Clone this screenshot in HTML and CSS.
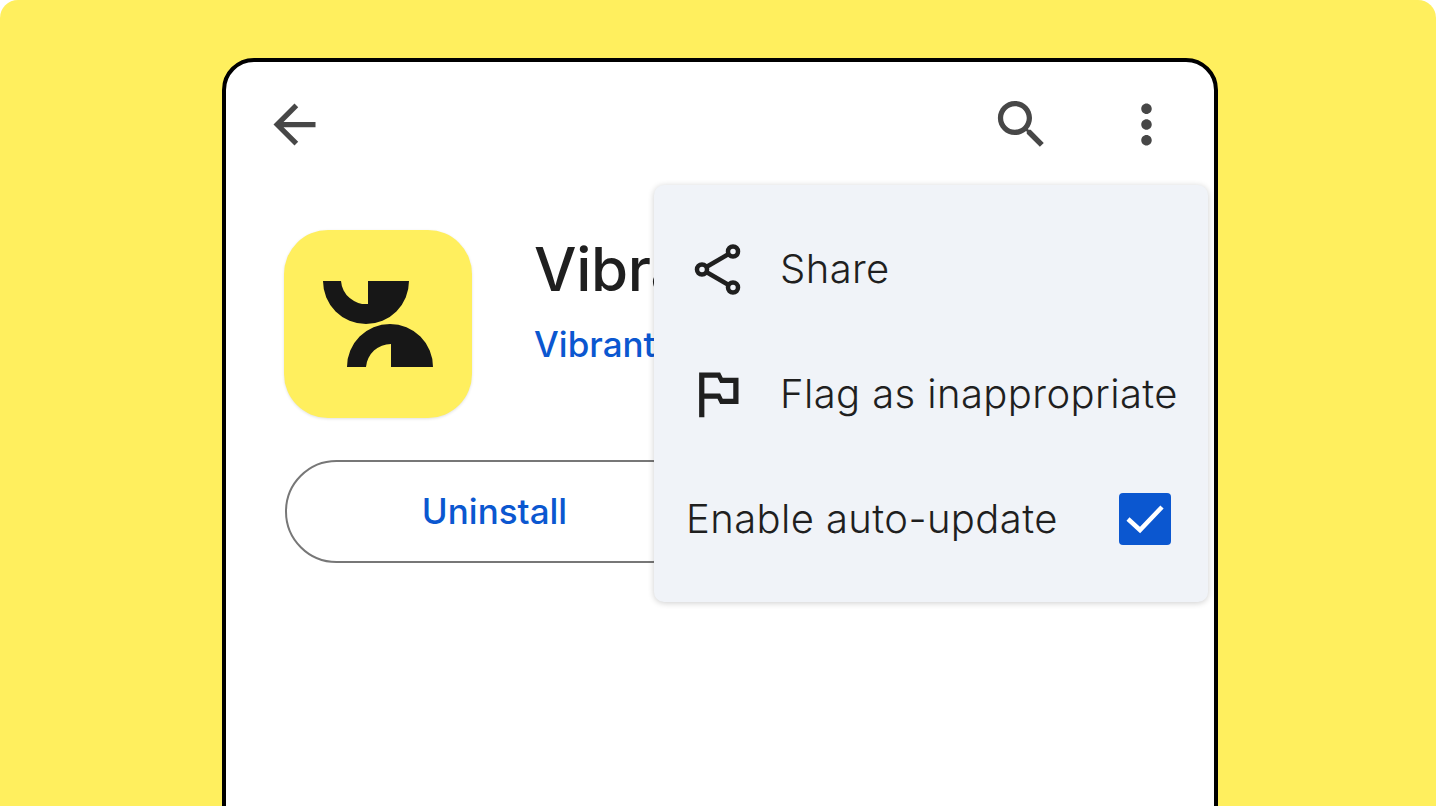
FILE: index.html
```html
<!DOCTYPE html>
<html lang="en">
<head>
    <meta charset="UTF-8">
    <meta name="viewport" content="width=device-width, initial-scale=1.0">
    <title>Enable auto-update</title>
    <link rel="stylesheet" href="styles.css">
</head>
<body>
    <div class="stage">
        <div class="phone">
            <div class="toolbar">
                <svg class="icon" viewBox="0 0 24 24"><path d="M20 11H7.83l5.59-5.59L12 4l-8 8 8 8 1.41-1.41L7.83 13H20v-2z"/></svg>
                <div class="toolbar-right">
                    <svg class="icon" viewBox="0 0 24 24"><path d="M15.5 14h-.79l-.28-.27C15.41 12.59 16 11.11 16 9.5 16 5.91 13.09 3 9.5 3S3 5.91 3 9.5 5.91 16 9.5 16c1.61 0 3.09-.59 4.23-1.57l.27.28v.79l5 4.99L20.49 19l-4.99-5zm-6 0C7.01 14 5 11.99 5 9.5S7.01 5 9.5 5 14 7.01 14 9.5 11.99 14 9.5 14z"/></svg>
                    <svg class="icon" viewBox="0 0 24 24"><path d="M12 8c1.1 0 2-.9 2-2s-.9-2-2-2-2 .9-2 2 .9 2 2 2zm0 2c-1.1 0-2 .9-2 2s.9 2 2 2 2-.9 2-2-.9-2-2-2zm0 6c-1.1 0-2 .9-2 2s.9 2 2 2 2-.9 2-2-.9-2-2-2z"/></svg>
                </div>
            </div>

            <div class="app-info">
                <div class="app-icon">
                    <svg class="app-logo" viewBox="0 0 188 188">
                        <path d="M39 51H57A25 25 0 0 0 84 74V51H125A43 43 0 0 1 39 51Z"/>
                        <path d="M63 137A43 43 0 0 1 149 137H107V114A25 25 0 0 0 82 137Z"/>
                    </svg>
                </div>
                <div class="app-text">
                    <div class="app-name">Vibrant</div>
                    <div class="app-dev">Vibrant</div>
                </div>
            </div>

            <div class="btn-uninstall">Uninstall</div>

            <div class="menu">
                <div class="menu-row">
                    <svg class="menu-icon" viewBox="0 0 63 63">
                        <g class="share-lines">
                            <line x1="16" y1="32.5" x2="47" y2="14.5"/>
                            <line x1="16" y1="32.5" x2="47" y2="50.5"/>
                            <circle cx="47" cy="14.5" r="5"/>
                            <circle cx="16" cy="32.5" r="5"/>
                            <circle cx="47" cy="50.5" r="5"/>
                        </g>
                    </svg>
                    <span>Share</span>
                </div>
                <div class="menu-row">
                    <svg class="menu-icon" viewBox="0 0 24 24"><path d="M14 6l-1-2H5v17h2v-7h5l1 2h7V6h-6zm4 8h-4l-1-2H7V6h5l1 2h5v6z"/></svg>
                    <span>Flag as inappropriate</span>
                </div>
                <div class="menu-row">
                    <span>Enable auto-update</span>
                    <div class="checkbox">
                        <svg viewBox="0 0 52 52"><path d="M9 26L21 37L43 14"/></svg>
                    </div>
                </div>
            </div>
        </div>
    </div>
</body>
</html>
```

FILE: styles.css
```css
html, body {
    margin: 0;
    height: 100%;
    background-color: #fff;
}

body {
    font-family: Inter, Roboto, sans-serif;
    overflow: hidden;
}

.stage {
    height: 806px;
    background-color: #FFEF5E;
    border-radius: 18px 18px 0 0;
    overflow: hidden;
    display: flex;
    justify-content: center;
    padding-top: 58px;
    box-sizing: border-box;
}

.phone {
    position: relative;
    flex: none;
    width: 996px;
    height: 900px;
    margin-left: 4px;
    box-sizing: border-box;
    background-color: #fff;
    border: 4px solid #000;
    border-radius: 32px;
}

.toolbar {
    display: flex;
    justify-content: space-between;
    padding: 31px 36px 0 37px;
}

.toolbar-right {
    display: flex;
    gap: 62px;
}

.icon {
    width: 63px;
    height: 63px;
    fill: #474747;
}

.app-info {
    display: flex;
    gap: 62px;
    margin: 74px 0 0 58px;
}

.app-icon {
    width: 188px;
    height: 188px;
    background-color: #FFEF5E;
    border-radius: 44px;
    box-shadow: 0 1px 3px rgba(0, 0, 0, 0.12);
}

.app-logo {
    display: block;
    fill: #171717;
}

.app-name {
    margin-top: 2px;
    font-size: 60px;
    line-height: 74px;
    font-weight: 500;
    letter-spacing: -0.3px;
    color: #1f1f1f;
}

.app-dev {
    margin-top: 16px;
    font-size: 35px;
    line-height: 44px;
    font-weight: 500;
    color: #0B57D0;
}

.btn-uninstall {
    width: 419px;
    height: 103px;
    margin: 42px 0 0 59px;
    box-sizing: border-box;
    border: 2.5px solid #777;
    border-radius: 52px;
    display: flex;
    align-items: center;
    justify-content: center;
    padding-bottom: 2px;
    font-size: 35px;
    font-weight: 500;
    color: #0B57D0;
}

.menu {
    position: absolute;
    top: 123px;
    left: 428px;
    width: 554px;
    height: 417px;
    padding: 21px 37px 21px 32px;
    box-sizing: border-box;
    background-color: #F0F3F8;
    border-radius: 10px;
    box-shadow: 0 1px 6px rgba(0, 0, 0, 0.2);
    display: flex;
    flex-direction: column;
}

.menu-row {
    flex: 1;
    display: flex;
    align-items: center;
    gap: 31px;
    font-size: 40px;
    font-weight: 350;
    letter-spacing: 0.4px;
    color: #1f1f1f;
    white-space: nowrap;
}

.menu-icon {
    flex: none;
    width: 63px;
    height: 63px;
    fill: #1f1f1f;
}

.share-lines line {
    stroke: #1f1f1f;
    stroke-width: 4.5;
}

.share-lines circle {
    fill: #F0F3F8;
    stroke: #1f1f1f;
    stroke-width: 4.5;
}

.checkbox {
    flex: none;
    width: 52px;
    height: 52px;
    margin-left: auto;
    background-color: #0B57D0;
    border-radius: 4px;
}

.checkbox svg {
    display: block;
    fill: none;
    stroke: #fff;
    stroke-width: 4.5;
}
```
